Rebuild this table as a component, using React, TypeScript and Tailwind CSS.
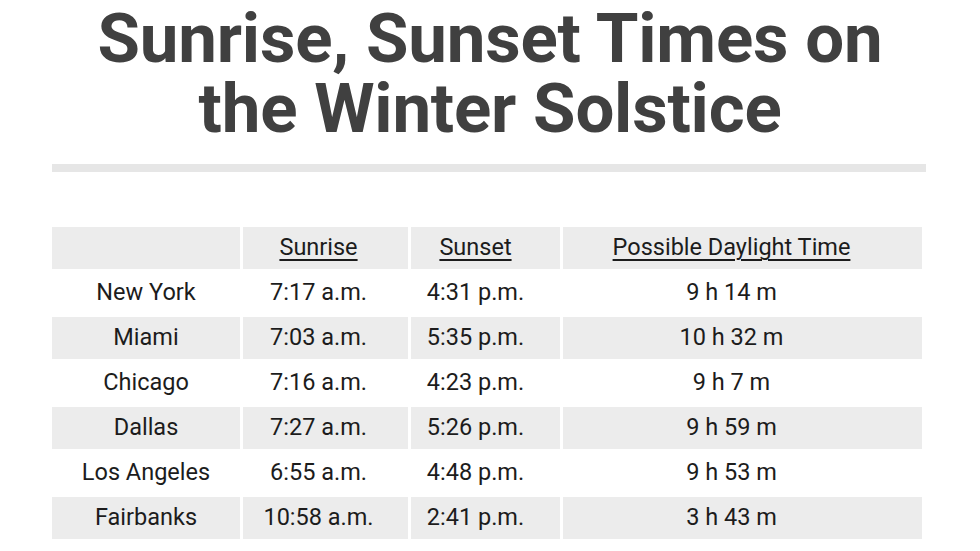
const rows = [
  ['New York', '7:17 a.m.', '4:31 p.m.', '9 h 14 m'],
  ['Miami', '7:03 a.m.', '5:35 p.m.', '10 h 32 m'],
  ['Chicago', '7:16 a.m.', '4:23 p.m.', '9 h 7 m'],
  ['Dallas', '7:27 a.m.', '5:26 p.m.', '9 h 59 m'],
  ['Los Angeles', '6:55 a.m.', '4:48 p.m.', '9 h 53 m'],
  ['Fairbanks', '10:58 a.m.', '2:41 p.m.', '3 h 43 m'],
];

const headers = ['', 'Sunrise', 'Sunset', 'Possible Daylight Time'];

// text in the reference sits a little left of each column's centre
const colPad = ['', 'pr-[14px]', 'pr-[20px]', 'pr-[22px]'];

export default function App() {
  return (
    <div className="w-[980px] h-[551px] bg-white overflow-hidden font-['Roboto',sans-serif]">
      <h1 className="pt-[4px] text-center text-[69px] leading-[70px] font-bold tracking-[-0.2px] text-[#404040]">
        Sunrise, Sunset Times on
        <br />
        the Winter Solstice
      </h1>
      <div className="mx-[52px] mt-[20px] h-[8px] w-[874px] bg-[#e6e6e6]" />
      <div className="ml-[52px] mt-[55px] grid grid-cols-[188px_165px_149px_359px] gap-[3px] text-[23.5px] font-normal text-[#1c1c1c]">
        {headers.map((h, i) => (
          <div key={i} className={`h-[42px] bg-[#ececec] flex items-center justify-center ${colPad[i]}`}>
            {h && <span className="underline underline-offset-[4px] decoration-[1.5px]">{h}</span>}
          </div>
        ))}
        {rows.map((r, ri) =>
          r.map((c, ci) => (
            <div
              key={ri + '-' + ci}
              className={`h-[42px] flex items-center justify-center ${colPad[ci]} ${ri % 2 === 1 ? 'bg-[#ececec]' : 'bg-white'}`}
            >
              {c}
            </div>
          ))
        )}
      </div>
    </div>
  );
}
